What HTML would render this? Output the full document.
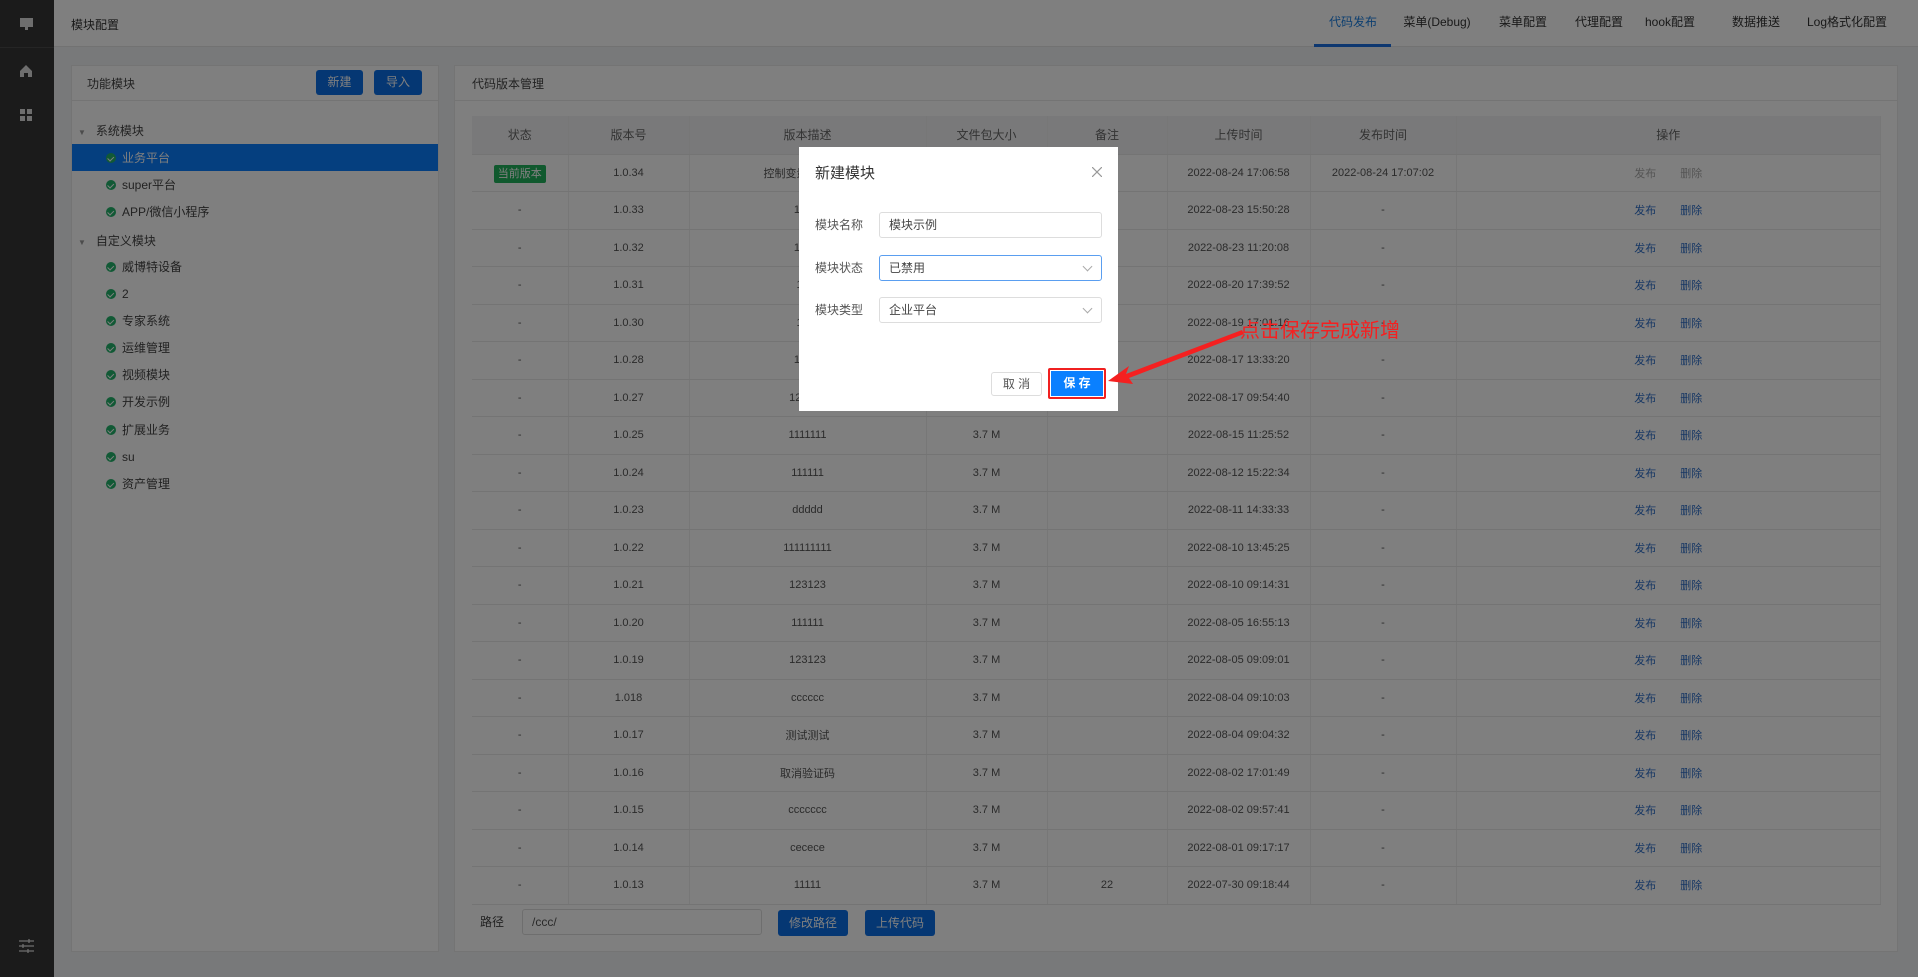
<!DOCTYPE html>
<html><head><meta charset="utf-8"><style>
*{box-sizing:border-box;margin:0;padding:0}
body{width:1918px;height:977px;position:relative;overflow:hidden;background:#f0f2f5;font-family:"Liberation Sans","Noto Sans CJK SC",sans-serif;font-size:12px;color:#333}
.a{position:absolute}
.side{left:0;top:0;width:54px;height:977px;background:#363636}
.hdr{left:54px;top:0;width:1864px;height:47px;background:#fff;border-bottom:1px solid #e4e4e4}
.tab{top:0;height:47px;line-height:45px;font-size:12px;color:#333;transform:translateX(-50%);white-space:nowrap}
.panel{background:#fff;border:1px solid #e8e8e8}
.btn{background:#0a6ee6;color:#fff;border-radius:3px;text-align:center;font-size:12px}
.ti{font-size:12px;color:#444;white-space:nowrap;line-height:16px}
.dot{display:inline-block;width:10px;height:10px;border-radius:50%;background:#23b36b;margin-right:6px;vertical-align:-1px;position:relative}
.dot:after{content:"";position:absolute;left:3px;top:1.5px;width:2.5px;height:4.5px;border-right:1.3px solid #fff;border-bottom:1.3px solid #fff;transform:rotate(45deg)}
table{border-collapse:collapse;position:absolute;left:472px;top:116px;width:1409px;table-layout:fixed}
td,th{height:37.5px;text-align:center;font-size:11px;color:#555;font-weight:normal;border-bottom:1px solid #e8e8e8;border-right:1px solid #eee;white-space:nowrap;overflow:hidden}
th{height:38px;background:#f2f3f5;color:#666;font-size:12px}
.lk{color:#2f6fc8;margin:0 12px}
.gy{color:#aaa;margin:0 12px}
.ov{left:0;top:0;width:1918px;height:977px;background:rgba(0,0,0,.5)}
.modal{left:799px;top:147px;width:319px;height:264px;background:#fff}
.lab{left:16px;font-size:12px;color:#555;line-height:26px}
.inp{left:80px;width:223px;height:26px;border:1px solid #ddd;border-radius:3px;font-size:12px;color:#444;line-height:24px;padding-left:9px}
.chev{position:absolute;right:10px;top:7px;width:7px;height:7px;border-right:1px solid #aaa;border-bottom:1px solid #aaa;transform:rotate(45deg)}
</style></head><body>
<div class="a side"></div>
<div class="a hdr"></div>
<div class="a" style="left:71px;top:16px;font-size:12px">模块配置</div>
<div class="a tab" style="left:1353px;color:#1a7ee0">代码发布</div>
<div class="a" style="left:1314px;top:44px;width:77px;height:3px;background:#1a6ee0"></div>
<div class="a tab" style="left:1437px">菜单(Debug)</div>
<div class="a tab" style="left:1523px">菜单配置</div>
<div class="a tab" style="left:1599px">代理配置</div>
<div class="a tab" style="left:1670px">hook配置</div>
<div class="a tab" style="left:1756px">数据推送</div>
<div class="a tab" style="left:1847px">Log格式化配置</div>
<div class="a" style="left:20px;top:18px;width:13px;height:9px;background:#ddd"></div>
<div class="a" style="left:25px;top:27px;width:3px;height:3px;background:#ddd"></div>
<div class="a" style="left:0;top:47px;width:54px;height:1px;background:#4a4a4a"></div>
<svg class="a" style="left:19px;top:64px" width="14" height="14"><path d="M1 7L7 1L13 7V13H9V9H5V13H1Z" fill="#ddd"/></svg>
<svg class="a" style="left:20px;top:109px" width="12" height="12"><rect x="0" y="0" width="5" height="5" fill="#ddd"/><rect x="7" y="0" width="5" height="5" fill="#ddd"/><rect x="0" y="7" width="5" height="5" fill="#ddd"/><rect x="7" y="7" width="5" height="5" fill="#ddd"/></svg>
<svg class="a" style="left:19px;top:939px" width="15" height="14" stroke="#ddd" stroke-width="1.3"><path d="M0 2H15M0 7H15M0 12H15"/><path d="M10 0V4M4 5V9M9 10V14"/></svg>
<div class="a panel" style="left:71px;top:65px;width:368px;height:887px"></div>
<div class="a" style="left:71px;top:100px;width:368px;height:1px;background:#e8e8e8"></div>
<div class="a ti" style="left:87px;top:76px">功能模块</div>
<div class="a btn" style="left:316px;top:70px;width:47px;height:25px;line-height:25px">新建</div>
<div class="a btn" style="left:374px;top:70px;width:48px;height:25px;line-height:25px">导入</div>
<div class="a" style="left:72px;top:144px;width:366px;height:27px;background:#0a7eff"></div>
<div class="a ti" style="left:78px;top:123px"><span style="font-size:8px;color:#999;margin-right:10px">▼</span>系统模块</div>
<div class="a ti" style="left:106px;top:150px;color:#fff"><span class="dot"></span>业务平台</div>
<div class="a ti" style="left:106px;top:177px"><span class="dot"></span>super平台</div>
<div class="a ti" style="left:106px;top:204px"><span class="dot"></span>APP/微信小程序</div>
<div class="a ti" style="left:78px;top:233px"><span style="font-size:8px;color:#999;margin-right:10px">▼</span>自定义模块</div>
<div class="a ti" style="left:106px;top:259px"><span class="dot"></span>威博特设备</div>
<div class="a ti" style="left:106px;top:286px"><span class="dot"></span>2</div>
<div class="a ti" style="left:106px;top:313px"><span class="dot"></span>专家系统</div>
<div class="a ti" style="left:106px;top:340px"><span class="dot"></span>运维管理</div>
<div class="a ti" style="left:106px;top:367px"><span class="dot"></span>视频模块</div>
<div class="a ti" style="left:106px;top:394px"><span class="dot"></span>开发示例</div>
<div class="a ti" style="left:106px;top:422px"><span class="dot"></span>扩展业务</div>
<div class="a ti" style="left:106px;top:449px"><span class="dot"></span>su</div>
<div class="a ti" style="left:106px;top:476px"><span class="dot"></span>资产管理</div>
<div class="a panel" style="left:454px;top:65px;width:1444px;height:887px"></div>
<div class="a" style="left:454px;top:100px;width:1444px;height:1px;background:#e8e8e8"></div>
<div class="a ti" style="left:472px;top:76px">代码版本管理</div>
<table>
<colgroup><col style="width:96px"><col style="width:121px"><col style="width:237px"><col style="width:121px"><col style="width:120px"><col style="width:143px"><col style="width:146px"><col></colgroup>
<tr><th>状态</th><th>版本号</th><th>版本描述</th><th>文件包大小</th><th>备注</th><th>上传时间</th><th>发布时间</th><th>操作</th></tr>
<tr><td><span style="background:#21b25c;color:#fff;padding:3px 4px;border-radius:2px;font-size:11px">当前版本</span></td><td>1.0.34</td><td>控制变量值，测试</td><td>3.7 M</td><td></td><td>2022-08-24 17:06:58</td><td>2022-08-24 17:07:02</td><td><span class="gy">发布</span><span class="gy">删除</span></td></tr>
<tr><td>-</td><td>1.0.33</td><td>11111</td><td>3.7 M</td><td></td><td>2022-08-23 15:50:28</td><td>-</td><td><span class="lk">发布</span><span class="lk">删除</span></td></tr>
<tr><td>-</td><td>1.0.32</td><td>11111</td><td>3.7 M</td><td></td><td>2022-08-23 11:20:08</td><td>-</td><td><span class="lk">发布</span><span class="lk">删除</span></td></tr>
<tr><td>-</td><td>1.0.31</td><td>1111</td><td>3.7 M</td><td></td><td>2022-08-20 17:39:52</td><td>-</td><td><span class="lk">发布</span><span class="lk">删除</span></td></tr>
<tr><td>-</td><td>1.0.30</td><td>1111</td><td>3.7 M</td><td></td><td>2022-08-19 17:01:16</td><td>-</td><td><span class="lk">发布</span><span class="lk">删除</span></td></tr>
<tr><td>-</td><td>1.0.28</td><td>11111</td><td>3.7 M</td><td></td><td>2022-08-17 13:33:20</td><td>-</td><td><span class="lk">发布</span><span class="lk">删除</span></td></tr>
<tr><td>-</td><td>1.0.27</td><td>123123</td><td>3.7 M</td><td></td><td>2022-08-17 09:54:40</td><td>-</td><td><span class="lk">发布</span><span class="lk">删除</span></td></tr>
<tr><td>-</td><td>1.0.25</td><td>1111111</td><td>3.7 M</td><td></td><td>2022-08-15 11:25:52</td><td>-</td><td><span class="lk">发布</span><span class="lk">删除</span></td></tr>
<tr><td>-</td><td>1.0.24</td><td>111111</td><td>3.7 M</td><td></td><td>2022-08-12 15:22:34</td><td>-</td><td><span class="lk">发布</span><span class="lk">删除</span></td></tr>
<tr><td>-</td><td>1.0.23</td><td>ddddd</td><td>3.7 M</td><td></td><td>2022-08-11 14:33:33</td><td>-</td><td><span class="lk">发布</span><span class="lk">删除</span></td></tr>
<tr><td>-</td><td>1.0.22</td><td>111111111</td><td>3.7 M</td><td></td><td>2022-08-10 13:45:25</td><td>-</td><td><span class="lk">发布</span><span class="lk">删除</span></td></tr>
<tr><td>-</td><td>1.0.21</td><td>123123</td><td>3.7 M</td><td></td><td>2022-08-10 09:14:31</td><td>-</td><td><span class="lk">发布</span><span class="lk">删除</span></td></tr>
<tr><td>-</td><td>1.0.20</td><td>111111</td><td>3.7 M</td><td></td><td>2022-08-05 16:55:13</td><td>-</td><td><span class="lk">发布</span><span class="lk">删除</span></td></tr>
<tr><td>-</td><td>1.0.19</td><td>123123</td><td>3.7 M</td><td></td><td>2022-08-05 09:09:01</td><td>-</td><td><span class="lk">发布</span><span class="lk">删除</span></td></tr>
<tr><td>-</td><td>1.018</td><td>cccccc</td><td>3.7 M</td><td></td><td>2022-08-04 09:10:03</td><td>-</td><td><span class="lk">发布</span><span class="lk">删除</span></td></tr>
<tr><td>-</td><td>1.0.17</td><td>测试测试</td><td>3.7 M</td><td></td><td>2022-08-04 09:04:32</td><td>-</td><td><span class="lk">发布</span><span class="lk">删除</span></td></tr>
<tr><td>-</td><td>1.0.16</td><td>取消验证码</td><td>3.7 M</td><td></td><td>2022-08-02 17:01:49</td><td>-</td><td><span class="lk">发布</span><span class="lk">删除</span></td></tr>
<tr><td>-</td><td>1.0.15</td><td>ccccccc</td><td>3.7 M</td><td></td><td>2022-08-02 09:57:41</td><td>-</td><td><span class="lk">发布</span><span class="lk">删除</span></td></tr>
<tr><td>-</td><td>1.0.14</td><td>cecece</td><td>3.7 M</td><td></td><td>2022-08-01 09:17:17</td><td>-</td><td><span class="lk">发布</span><span class="lk">删除</span></td></tr>
<tr><td>-</td><td>1.0.13</td><td>11111</td><td>3.7 M</td><td>22</td><td>2022-07-30 09:18:44</td><td>-</td><td><span class="lk">发布</span><span class="lk">删除</span></td></tr>
</table>
<div class="a" style="left:455px;top:905px;width:1442px;height:46px;background:#fff"></div>
<div class="a ti" style="left:480px;top:914px">路径</div>
<div class="a" style="left:522px;top:909px;width:240px;height:26px;border:1px solid #ddd;border-radius:3px;padding-left:9px;line-height:24px;font-size:12px;color:#555">/ccc/</div>
<div class="a btn" style="left:778px;top:910px;width:70px;height:26px;line-height:26px">修改路径</div>
<div class="a btn" style="left:865px;top:910px;width:70px;height:26px;line-height:26px">上传代码</div>
<div class="a ov"></div>
<div class="a modal">
<div class="a" style="left:16px;top:15px;font-size:15px;color:#333">新建模块</div>
<svg class="a" style="left:293px;top:20px" width="10" height="10" stroke="#999" stroke-width="1.2"><path d="M0 0L10 10M10 0L0 10"/></svg>
<div class="a lab" style="top:65px">模块名称</div>
<div class="a inp" style="top:65px">模块示例</div>
<div class="a lab" style="top:108px">模块状态</div>
<div class="a inp" style="top:108px;border-color:#5a9ef0">已禁用<span class="chev"></span></div>
<div class="a lab" style="top:150px">模块类型</div>
<div class="a inp" style="top:150px">企业平台<span class="chev"></span></div>
<div class="a" style="left:192px;top:225px;width:51px;height:24px;border:1px solid #ddd;border-radius:3px;text-align:center;line-height:22px;font-size:12px;color:#555">取 消</div>
<div class="a" style="left:249px;top:221px;width:58px;height:31px;border:2px solid #f02020;border-radius:2px"></div>
<div class="a" style="left:252px;top:224px;width:52px;height:25px;background:#0a80ff;color:#fff;text-align:center;line-height:25px;font-size:12px;font-weight:bold">保 存</div>
</div>
<div class="a" style="left:1240px;top:314px;font-size:20px;color:#f52020;white-space:nowrap">点击保存完成新增</div>
<svg class="a" style="left:1100px;top:320px" width="150" height="80"><path d="M142 10L26 54L29 46L8 61L33 64L29 58L144 14Z" fill="#f52020"/></svg>
</body></html>
